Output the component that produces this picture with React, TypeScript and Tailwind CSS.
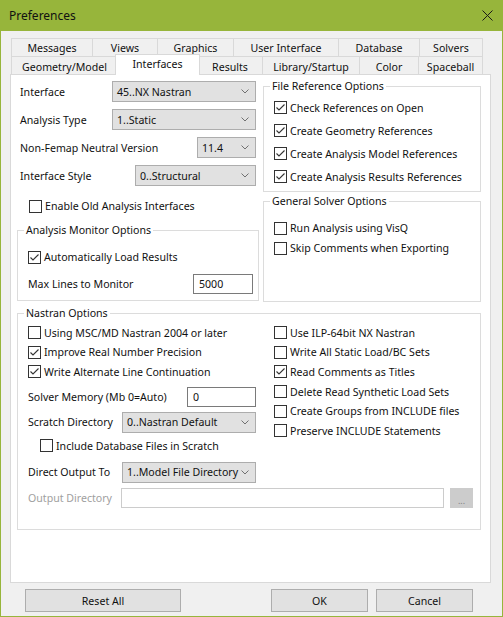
import type { ReactNode } from "react";

const CheckBox = ({ on }: { on?: boolean }) => (
  <span className="flex h-[13px] w-[13px] shrink-0 items-center justify-center border border-[#333333] bg-white">
    {on && (
      <svg width="11" height="11" viewBox="0 0 11 11">
        <path d="M1.5 5.5 4 8l5.5-5.5" fill="none" stroke="#333333" strokeWidth="1.1" />
      </svg>
    )}
  </span>
);

const CheckRow = ({ label, on, className = "" }: { label: string; on?: boolean; className?: string }) => (
  <label className={`flex items-center gap-[3px] ${className}`}>
    <CheckBox on={on} />
    <span>{label}</span>
  </label>
);

const Select = ({ value, className = "" }: { value: string; className?: string }) => (
  <div className={`flex h-[21px] shrink-0 items-center justify-between border border-[#adadad] bg-[#e1e1e1] pl-[4px] pr-[6px] ${className}`}>
    <span>{value}</span>
    <svg width="8" height="5" viewBox="0 0 8 5">
      <path d="M.5.5 4 4 7.5.5" fill="none" stroke="#707070" />
    </svg>
  </div>
);

const Group = ({ title, className = "", children }: { title: string; className?: string; children: ReactNode }) => (
  <fieldset className={`border border-[#dcdcdc] pl-[10px] ${className}`}>
    <legend className="ml-[-4px] px-[2px] leading-[14px]">{title}</legend>
    {children}
  </fieldset>
);

const row1 = [
  ["Messages", "w-[82px]"],
  ["Views", "w-[66px]"],
  ["Graphics", "w-[77px]"],
  ["User Interface", "w-[106px]"],
  ["Database", "w-[82px]"],
  ["Solvers", "w-[64px]"],
];

const Button = ({ label, className = "" }: { label: string; className?: string }) => (
  <div className={`flex h-[23px] items-center justify-center border border-[#adadad] bg-[#e1e1e1] ${className}`}>{label}</div>
);

export default function App() {
  return (
    <div className="flex h-[617px] w-[503px] flex-col bg-[#97b53b] font-['Noto_Sans','Open_Sans',sans-serif] text-[10.6px] leading-[14px] text-[#111111]">
      <div className="flex h-[31px] shrink-0 items-center justify-between pl-[9px] pr-[10px]">
        <span className="text-[12px]">Preferences</span>
        <svg width="11" height="11" viewBox="0 0 11 11">
          <path d="M.5.5l10 10M10.5.5l-10 10" stroke="#1a1a1a" strokeWidth="1" />
        </svg>
      </div>

      <div className="mx-[1px] mb-[1px] flex flex-1 flex-col bg-[#f0f0f0] pt-[7px]">
        {/* tabs */}
        <div className="ml-[10px] flex">
          {row1.map(([t, w], i) => (
            <div key={t} className={`flex h-[19px] items-center justify-center border border-[#d9d9d9] ${i ? "-ml-px" : ""} ${w}`}>
              {t}
            </div>
          ))}
        </div>
        <div className="-mt-px ml-[10px] flex">
          <div className="flex h-[18px] w-[107px] items-center justify-center border-x border-t border-[#d9d9d9] pt-[2px]">Geometry/Model</div>
          <div className="relative z-10 -mb-px -mt-[2px] ml-[-3px] mr-[-2px] flex h-[21px] w-[85px] justify-center border-x border-t border-[#d9d9d9] bg-white pt-[2px]">
            Interfaces
          </div>
          <div className="-ml-px flex h-[18px] w-[66px] items-center justify-center border-x border-t border-[#d9d9d9] pt-[2px]">Results</div>
          <div className="-ml-px flex h-[18px] w-[98px] items-center justify-center border-x border-t border-[#d9d9d9] pt-[2px]">Library/Startup</div>
          <div className="-ml-px flex h-[18px] w-[60px] items-center justify-center border-x border-t border-[#d9d9d9] pt-[2px]">Color</div>
          <div className="-ml-px flex h-[18px] w-[65px] items-center justify-center border-x border-t border-[#d9d9d9] pt-[2px]">Spaceball</div>
        </div>

        {/* tab page */}
        <div className="ml-[9px] flex h-[509px] w-[481px] flex-col border border-[#d9d9d9] bg-white pl-[6px]">
          <div className="flex gap-[4px]">
            <div className="flex w-[242px] flex-col">
              <div className="flex flex-col gap-[7px] px-[3px] pt-[6px]">
                <div className="flex h-[21px] items-center">
                  <span>Interface</span>
                  <Select value="45..NX Nastran" className="ml-auto w-[144px]" />
                </div>
                <div className="flex h-[21px] items-center">
                  <span>Analysis Type</span>
                  <Select value="1..Static" className="ml-auto w-[144px]" />
                </div>
                <div className="flex h-[21px] items-center">
                  <span>Non-Femap Neutral Version</span>
                  <Select value="11.4" className="ml-auto w-[59px]" />
                </div>
                <div className="flex h-[21px] items-center">
                  <span>Interface Style</span>
                  <Select value="0..Structural" className="ml-auto w-[121px]" />
                </div>
              </div>
              <CheckRow label="Enable Old Analysis Interfaces" className="ml-[12px] mt-[10px] h-[20px]" />
              <Group title="Analysis Monitor Options" className="mt-[7px] h-[78px] pr-[5px]">
                <CheckRow label="Automatically Load Results" on className="mt-[10px] h-[20px]" />
                <div className="mt-[7px] flex h-[20px] items-center justify-between">
                  <span>Max Lines to Monitor</span>
                  <div className="flex h-[20px] w-[60px] items-center border border-[#7a7a7a] bg-white pl-[5px]">5000</div>
                </div>
              </Group>
            </div>

            <div className="flex w-[218px] flex-col pt-[4px]">
              <Group title="File Reference Options" className="h-[113px]">
                <div className="mt-[3px] flex flex-col">
                  <CheckRow label="Check References on Open" on className="h-[23px]" />
                  <CheckRow label="Create Geometry References" on className="h-[23px]" />
                  <CheckRow label="Create Analysis Model References" on className="h-[23px]" />
                  <CheckRow label="Create Analysis Results References" on className="h-[23px]" />
                </div>
              </Group>
              <Group title="General Solver Options" className="mt-[2px] h-[108px]">
                <div className="mt-[10px] flex flex-col">
                  <CheckRow label="Run Analysis using VisQ" className="h-[20px]" />
                  <CheckRow label="Skip Comments when Exporting" className="h-[20px]" />
                </div>
              </Group>
            </div>
          </div>

          <Group title="Nastran Options" className="mt-[4px] h-[224px] w-[464px]">
            <div className="flex">
              <div className="flex w-[228px] flex-col pt-[3px]">
                <CheckRow label="Using MSC/MD Nastran 2004 or later" className="h-[19.6px]" />
                <CheckRow label="Improve Real Number Precision" on className="h-[19.6px]" />
                <CheckRow label="Write Alternate Line Continuation" on className="h-[19.6px]" />
                <div className="mt-[5px] flex h-[20px] items-center justify-between">
                  <span>Solver Memory (Mb 0=Auto)</span>
                  <div className="flex h-[20px] w-[69px] items-center border border-[#7a7a7a] bg-white pl-[5px]">0</div>
                </div>
                <div className="mt-[5px] flex h-[21px] items-center justify-between">
                  <span>Scratch Directory</span>
                  <Select value="0..Nastran Default" className="w-[134px]" />
                </div>
                <CheckRow label="Include Database Files in Scratch" className="ml-[12px] mt-[3px] h-[20px]" />
                <div className="mt-[6px] flex h-[21px] items-center justify-between">
                  <span>Direct Output To</span>
                  <Select value="1..Model File Directory" className="w-[134px]" />
                </div>
              </div>
              <div className="ml-[18px] flex flex-col pt-[3px]">
                <CheckRow label="Use ILP-64bit NX Nastran" className="h-[19.6px]" />
                <CheckRow label="Write All Static Load/BC Sets" className="h-[19.6px]" />
                <CheckRow label="Read Comments as Titles" on className="h-[19.6px]" />
                <CheckRow label="Delete Read Synthetic Load Sets" className="h-[19.6px]" />
                <CheckRow label="Create Groups from INCLUDE files" className="h-[19.6px]" />
                <CheckRow label="Preserve INCLUDE Statements" className="h-[19.6px]" />
              </div>
            </div>
            <div className="mt-[5px] flex h-[20px] items-center">
              <span className="w-[93px] text-[#a0a0a0]">Output Directory</span>
              <div className="h-[20px] w-[323px] border border-[#cccccc] bg-white" />
              <div className="ml-[6px] flex h-[20px] w-[23px] items-end justify-center bg-[#cccccc] pb-[3px] text-[9px] leading-[9px] text-[#838383]">
                ...
              </div>
            </div>
          </Group>
        </div>

        <div className="mt-[6px] flex">
          <Button label="Reset All" className="ml-[24px] w-[156px]" />
          <Button label="OK" className="ml-[90px] w-[97px]" />
          <Button label="Cancel" className="ml-[8px] w-[97px]" />
        </div>
      </div>
    </div>
  );
}
